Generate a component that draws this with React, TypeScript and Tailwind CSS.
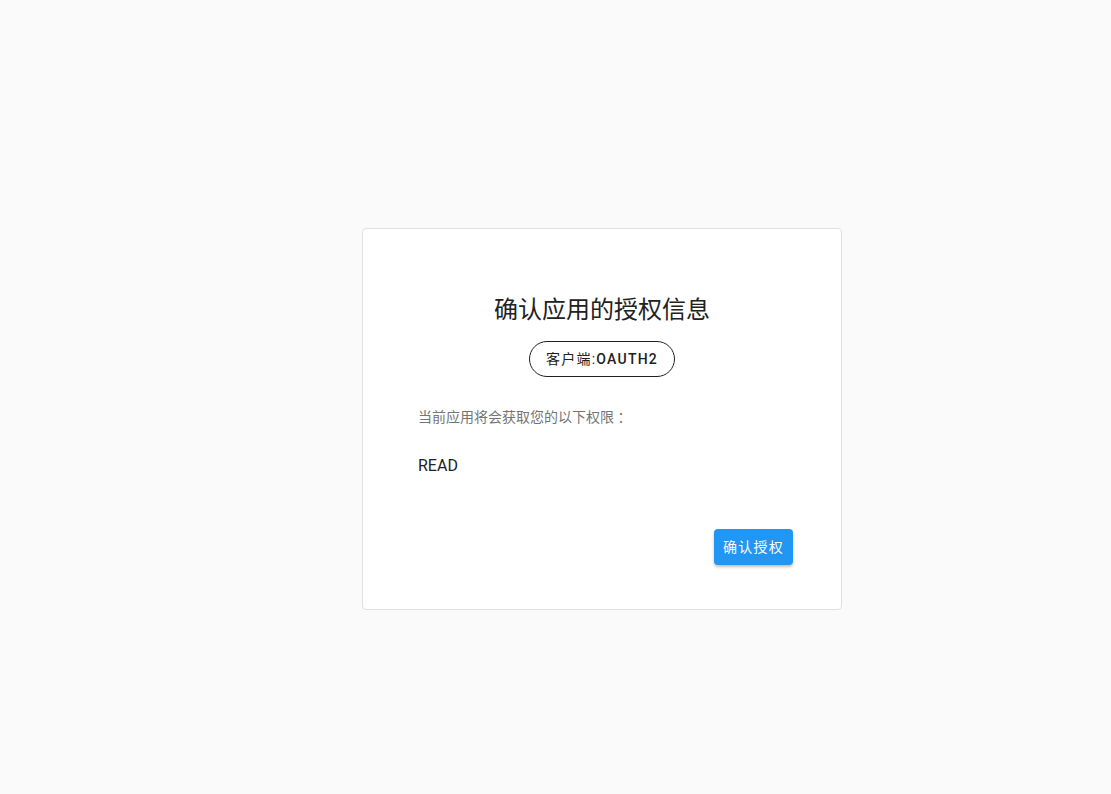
import React from 'react';

const font = { fontFamily: 'Roboto, "Noto Sans CJK SC", sans-serif' };

const App: React.FC = () => {
  const scopes = ['READ'];

  return (
    <div className="min-h-[794px] w-full bg-[#fafafa] pt-[228px]" style={font}>
      <div className="ml-[362px] w-[480px] h-[382px] bg-white border border-[#e0e0e0] rounded-[4px] pt-[65px] px-12 flex flex-col">
        <h2 className="text-center text-[24px] leading-8 text-[#212121] font-normal">确认应用的授权信息</h2>
        <div className="flex justify-center mt-[15px]">
          <div className="h-9 px-4 flex items-center rounded-full border border-[#212121] text-[14px] text-[#212121] tracking-[1.25px]">
            客户端:<span className="font-medium">OAUTH2</span>
          </div>
        </div>
        <p className="mt-[30px] px-[7px] h-5 text-[14px] leading-5 text-[#757575]">
          当前应用将会获取您的以下权限
          <span className="inline-block w-[14px] h-5 leading-5 align-top text-center" style={{ fontFamily: '"Noto Sans CJK TC", sans-serif' }}>：</span>
        </p>
        <ul className="mt-[27px] px-[7px]">
          {scopes.map((s) => (
            <li key={s} className="text-[16px] leading-6 text-[#212121]">{s}</li>
          ))}
        </ul>
        <div className="flex justify-end mt-[51px]">
          <button className="h-9 w-[79px] rounded-[4px] bg-[#2196f3] text-white text-[14px] tracking-[1.25px] shadow-[0_2px_3px_rgba(0,0,0,0.25)]">
            确认授权
          </button>
        </div>
      </div>
    </div>
  );
};

export default App;
